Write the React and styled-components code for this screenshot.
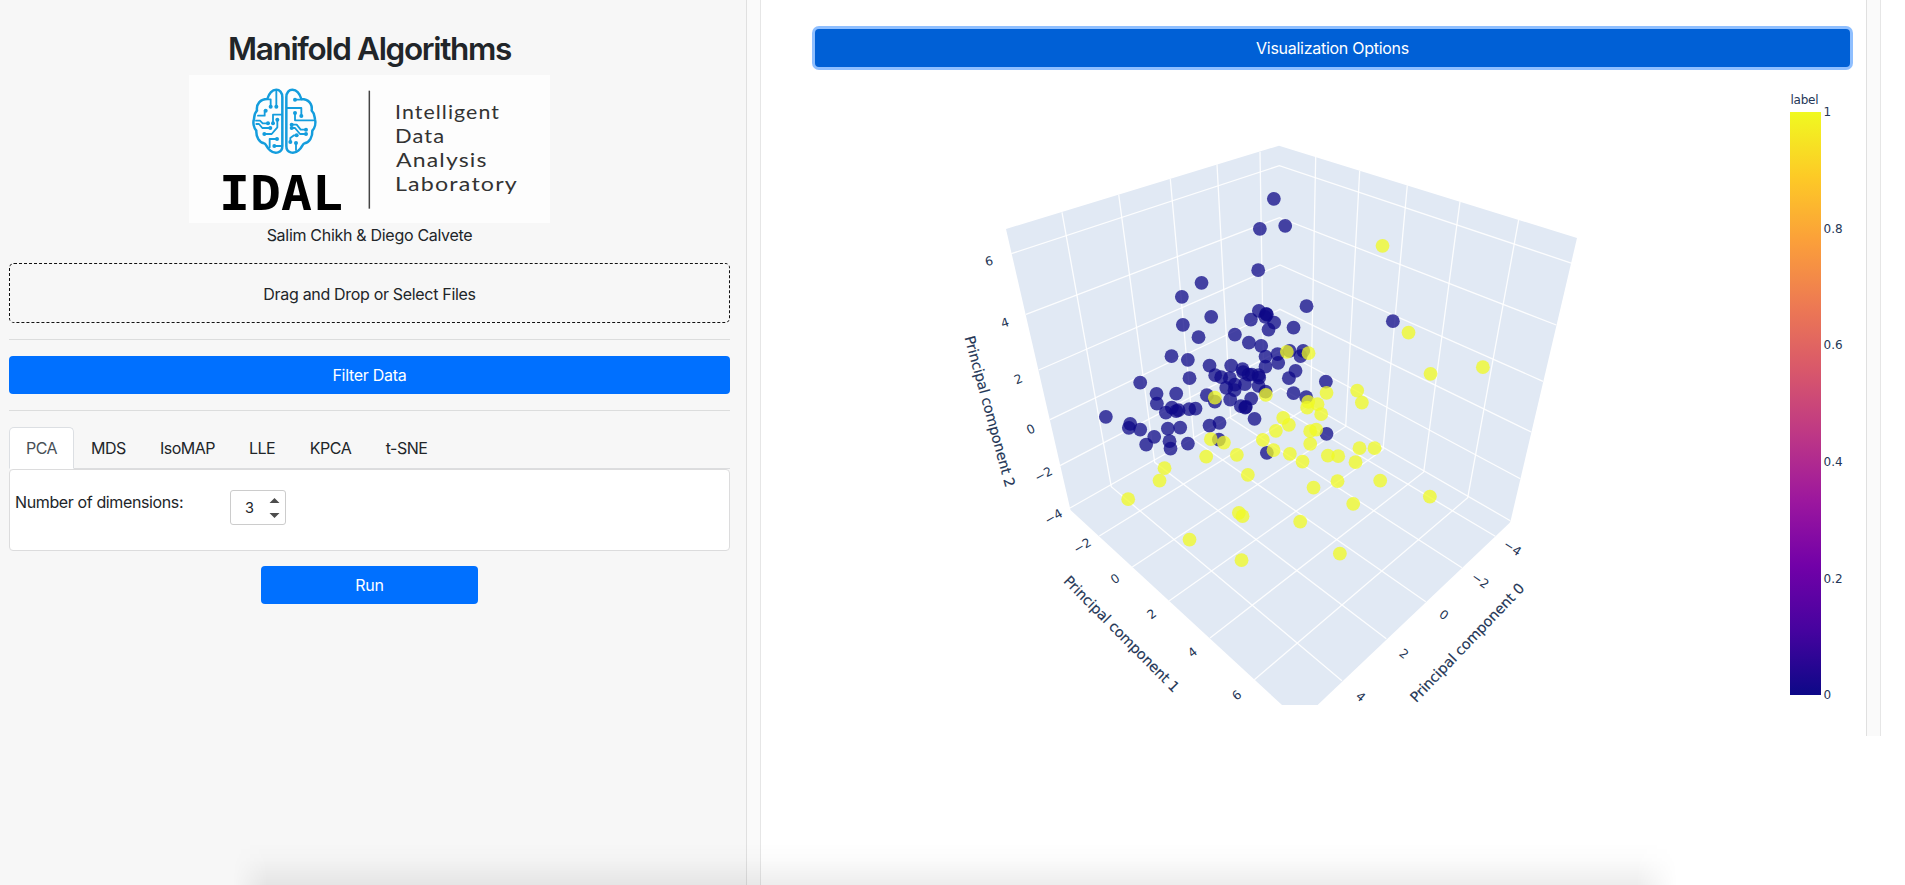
import React from "react";
import styled, { createGlobalStyle } from "styled-components";

const Global = createGlobalStyle`
  * { box-sizing: border-box; }
  html, body { margin: 0; height: 100%; overflow: hidden; background: #fff; }
  body { font-family: Inter, "Liberation Sans", sans-serif; font-size: 16px; line-height: 24px; color: #212529; }
`;

const Page = styled.div`
  display: flex;
  align-items: flex-start;
  width: 1905px;
  height: 885px;
  overflow: hidden;
`;

const Sidebar = styled.aside`
  width: 746px;
  height: 885px;
  padding: 30px 16px 0 9px;
  background: #f7f7f7;
  display: flex;
  flex-direction: column;
`;

const Gutter = styled.div`
  flex: none;
  width: 15px;
  height: ${(p) => p.$height}px;
  background: #fafafa;
  border-left: 1px solid #e0e0e0;
  border-right: 1px solid #e6e6e6;
`;

const Title = styled.h1`
  margin: 0;
  height: 45px;
  font-size: 31.5px;
  line-height: 38px;
  font-weight: 600;
  letter-spacing: -1.35px;
  text-align: center;
  white-space: nowrap;
`;

const Logo = styled.svg`
  display: block;
  width: 361px;
  height: 148px;
  margin: 0 auto;
  background: #fdfdfd;
`;

const Authors = styled.div`
  height: 40px;
  text-align: center;
  letter-spacing: -0.3px;
`;

const DropZone = styled.div`
  height: 60px;
  border: 1px dashed #111;
  border-radius: 5px;
  display: flex;
  align-items: center;
  justify-content: center;
  padding-top: 2px;
  letter-spacing: -0.32px;
`;

const Rule = styled.hr`
  width: 100%;
  height: 1px;
  margin: 16px 0;
  border: 0;
  background: #dcdddd;
`;

const Button = styled.button`
  flex: none;
  width: ${(p) => p.$width};
  height: 38px;
  padding: 0;
  border: 0;
  border-radius: 4px;
  color: #fff;
  font: inherit;
  letter-spacing: -0.28px;
  background: ${(p) => (p.$focused ? "#0060d6" : "#0070ff")};
  box-shadow: ${(p) => (p.$focused ? "0 0 0 3px #8fbfff" : "none")};
`;

const Tabs = styled.nav`
  display: flex;
  height: 42px;
  border-bottom: 1px solid #dcdddf;
`;

const Tab = styled.div`
  width: ${(p) => p.$width}px;
  height: 42px;
  display: flex;
  align-items: center;
  justify-content: center;
  letter-spacing: -0.5px;
  border: 1px solid ${(p) => (p.$active ? "#dcdfe3" : "transparent")};
  border-bottom-color: ${(p) => (p.$active ? "#fff" : "transparent")};
  border-radius: 5px 5px 0 0;
  background: ${(p) => (p.$active ? "#fff" : "transparent")};
  color: ${(p) => (p.$active ? "#495057" : "#212529")};
`;

const Card = styled.section`
  height: 82px;
  margin-bottom: 15px;
  padding: 20px 5px;
  display: flex;
  align-items: flex-start;
  background: #fff;
  border: 1px solid #dcdcdd;
  border-radius: 4px;
`;

const FieldLabel = styled.label`
  width: 215px;
  letter-spacing: -0.38px;
`;

const NumberField = styled.div`
  width: 56px;
  height: 35px;
  padding: 0 5px 0 14px;
  display: flex;
  align-items: center;
  justify-content: space-between;
  border: 1px solid #ccc;
  border-radius: 3px;
  font-size: 14.5px;
`;

const Stepper = styled.svg`
  width: 11px;
  height: 22px;
`;

const Centered = styled.div`
  display: flex;
  justify-content: center;
`;

const Main = styled.main`
  width: 1105px;
  height: 736px;
  padding: 29px 16px 0 54px;
  display: flex;
  flex-direction: column;
  gap: 17px;
`;

const Chart = styled.svg`
  display: block;
  width: 1035px;
  height: 640px;
`;

const DockShade = styled.div`
  position: absolute;
  left: 233px;
  top: 843px;
  width: 1444px;
  height: 42px;
  pointer-events: none;
  background: linear-gradient(to bottom, transparent, rgba(0, 0, 0, 0.016) 40%, rgba(0, 0, 0, 0.072));
  mask-image: linear-gradient(to right, transparent, #000 34px, #000 calc(100% - 40px), transparent);
`;

const gridLines = [
  // height levels across both walls
  "1011.3,253.7 1279.3,165.7 1572,263.3",
  "1026,314.3 1279.5,217.7 1556.3,325",
  "1038.7,370 1280,265 1543,381.3",
  "1050,419.7 1280,309.3 1531.3,432",
  "1060,465.7 1280.3,350.3 1520.3,478.7",
  "1070,508 1280.7,388.3 1510.3,520.7",
  // left wall continued over the floor
  "1062,212.3 1111.3,486.7 1341.9,680.7",
  "1118.7,194.7 1154.7,462.3 1386.3,638.7",
  "1170.3,179 1194,440 1425.8,601.7",
  "1217,164.3 1230.7,418.3 1462,567.7",
  "1260,151.7 1264,398.5 1495.3,536.3",
  // right wall continued over the floor
  "1315.7,156.7 1310.7,405.5 1099.3,536",
  "1359.7,170.7 1345.7,426.5 1132.3,567",
  "1407.3,185.3 1383,449.7 1169,601",
  "1460,201.7 1423.7,472 1210,638",
  "1518.7,219.7 1467.7,497.7 1254.3,679.7",
];

// marker centres, in thirds of a pixel from (940, 130)
const navy = [
  [1001,206],[1035,287],[959,296],[954,420],[784,458],[725,500],[813,560],[728,584],[775,621],[694,678],
  [743,689],[748,744],[600,757],[649,791],[708,790],[650,820],[497,860],[570,881],[566,893],[600,898],
  [683,895],[720,892],[642,920],[618,943],[688,933],[691,955],[743,940],[808,706],[873,706],[825,735],
  [843,741],[869,744],[907,717],[909,726],[925,733],[935,733],[955,735],[957,742],[884,763],[858,773],
  [883,780],[914,762],[955,767],[976,784],[870,808],[933,805],[943,866],[902,828],[917,830],[915,832],
  [800,795],[824,814],[677,847],[695,832],[708,843],[715,840],[747,837],[766,835],[808,886],[838,878],
  [884,613],[926,637],[963,647],[932,568],[956,542],[978,551],[975,560],[980,553],[1002,577],[985,598],
  [1060,592],[1099,528],[1012,672],[1014,698],[976,679],[976,709],[1048,662],[1089,662],[1081,678],
  [1066,722],[1046,744],[1060,789],[1098,801],[1157,754],[836,928],[980,968],[1159,911],[1358,573],
];
const yellow = [
  [1040,665],[1105,669],[824,802],[977,794],[1159,788],[1251,781],[1265,817],[1104,815],[1132,822],
  [1101,832],[1143,852],[1029,863],[1046,884],[1007,902],[1110,903],[1128,898],[968,929],[1110,941],
  [1000,960],[1049,971],[1087,994],[1163,976],[1194,978],[1258,954],[1303,954],[1246,996],[1320,1051],
  [1192,1053],[1120,1072],[1239,1121],[1469,1099],[1080,1174],[1199,1270],[1471,731],[1405,607],
  [1628,711],[1327,347],[812,927],[851,937],[798,979],[890,974],[923,1034],[673,1014],[658,1051],
  [564,1107],[896,1148],[907,1158],[748,1228],[904,1290],
];

const tickLabels = [
  ["6", 989, 261, -14], ["4", 1005, 322.7, -18], ["2", 1018.3, 379, -22], ["0", 1030.7, 429.3, -25],
  ["−2", 1043.5, 474.3, -28], ["−4", 1053.5, 516.7, -30],
  ["−2", 1082.2, 545.7, -31], ["0", 1115, 578.7, -34], ["2", 1151.7, 614, -36], ["4", 1192.5, 652.3, -38], ["6", 1236.7, 695.3, -40],
  ["−4", 1512.5, 547.9, 33], ["−2", 1480.3, 580.5, 35], ["0", 1443.9, 614.7, 36], ["2", 1404, 653.7, 38], ["4", 1360.8, 696.7, 40],
];

const axisTitles = [
  ["Principal component 2", 989.3, 411.5, 74.7, 156],
  ["Principal component 1", 1121.3, 634.3, 45.2, 157],
  ["Principal component 0", 1467.5, 643, -46.3, 158],
];

const plasma = ["#f0f921", "#fdca26", "#fb9f3a", "#ed7953", "#d8576b", "#bd3786", "#9c179e", "#7201a8", "#46039f", "#0d0887"];

const colorTicks = ["1", "0.8", "0.6", "0.4", "0.2", "0"];

function ScatterPlot() {
  return (
    <Chart viewBox="815 84 1035 640" fontFamily='"DejaVu Sans", Verdana, sans-serif' fill="#243656">
      <defs>
        <linearGradient id="plasma" x1="0" y1="0" x2="0" y2="1">
          {plasma.map((c, i) => <stop key={c} offset={i / 9} stopColor={c} />)}
        </linearGradient>
      </defs>
      <polygon points="1279,145.7 1577,238 1510.6,520.7 1509.5,523 1317.6,705 1282,705 1070.5,510 1006,229" fill="#e1e9f4" />
      <g fill="none" stroke="#fff" strokeWidth="1.3" strokeOpacity="0.9">
        {gridLines.map((p) => <polyline key={p} points={p} />)}
      </g>
      <g fill="#0d0887" fillOpacity="0.75">
        {navy.map(([x, y], i) => <circle key={i} cx={940.2 + x / 3} cy={130.2 + y / 3} r="6.9" />)}
      </g>
      <g fill="#f0f921" fillOpacity="0.75">
        {yellow.map(([x, y], i) => <circle key={i} cx={940.2 + x / 3} cy={130.2 + y / 3} r="6.9" />)}
      </g>
      <g fontSize="12.3" textAnchor="middle">
        {tickLabels.map(([t, x, y, r]) => (
          <text key={`${x}`} transform={`translate(${x} ${y}) rotate(${r})`} y="4.3">{t}</text>
        ))}
      </g>
      <g fontSize="14.3" textAnchor="middle" stroke="#243656" strokeWidth="0.15">
        {axisTitles.map(([t, x, y, r, w]) => (
          <text key={t} transform={`translate(${x} ${y}) rotate(${r})`} y="4.5" textLength={w}>{t}</text>
        ))}
      </g>
      <rect x="1790" y="112" width="31" height="583" fill="url(#plasma)" />
      <g fontSize="12">
        <text x="1790.5" y="104" textLength="28">label</text>
        {colorTicks.map((t, i) => (
          <text key={t} x="1823.5" y={116.2 + i * 116.6}>{t}</text>
        ))}
      </g>
    </Chart>
  );
}

function IdalLogo() {
  return (
    <Logo viewBox="27 165 1083 444">
      <g fill="none" stroke="#149ddd" strokeWidth="7.5" strokeLinejoin="round" strokeLinecap="round">
        <path d="M307 378V232C307 202 273 199 262 237C241 237 228 252 231 272C222 280 223 289 222 298C218 308 221 323 229 332C228 352 238 367 252 370C259 371 259 383 270 391C285 404 307 399 307 378Z" />
        <path d="M319 378V232C319 202 353 199 364 237C386 237 398 252 395 272C404 280 403 289 405 298C408 308 405 323 397 332C398 352 388 367 374 370C367 371 367 383 356 391C341 404 319 399 319 378Z" />
        <g strokeWidth="5.5">
          <path d="M289 215V260M264 238H272V260M234 287H254V272M305 284H279V308M228 302H240L248 310H264M229 312H237L247 324H272M292 300V322L275 342H254M291 357H269V382M305 378H284" />
          <path d="M346 239H365M322 264H364V288M345 279V301H400M335 314H350L362 329H378M335 324H345L360 342H378M350 346H342L331 354V366M348 369V390" />
        </g>
      </g>
      <g fill="#149ddd">
        {[[272,260],[289,260],[257,272],[279,310],[264,310],[271,324],[292,299],[253,342],[291,357],[283,378],
          [345,239],[364,288],[345,279],[335,314],[335,324],[378,329],[378,342],[350,346],[331,366],[348,369]].map(([x, y]) => (
          <circle key={`${x}-${y}`} cx={x} cy={y} r="6" />
        ))}
      </g>
      <text x="117" y="570" fontFamily='"DejaVu Sans Mono", monospace' fontWeight="700" fontSize="145" textLength="372" lengthAdjust="spacingAndGlyphs" fill="#000">IDAL</text>
      <path d="M568 212V566" stroke="#444" strokeWidth="4.5" />
      <g fontFamily="Lato, sans-serif" fontSize="59" letterSpacing="3" fill="#333">
        <text x="645" y="298" textLength="315" lengthAdjust="spacingAndGlyphs">Intelligent</text>
        <text x="645" y="370" textLength="151" lengthAdjust="spacingAndGlyphs">Data</text>
        <text x="648" y="441" textLength="275" lengthAdjust="spacingAndGlyphs">Analysis</text>
        <text x="645" y="514" textLength="369" lengthAdjust="spacingAndGlyphs">Laboratory</text>
      </g>
    </Logo>
  );
}

const tabs = [["PCA", 65], ["MDS", 69], ["IsoMAP", 89], ["LLE", 60], ["KPCA", 77], ["t-SNE", 75]];

export default function App() {
  return (
    <>
      <Global />
      <Page>
        <Sidebar>
          <Title>Manifold Algorithms</Title>
          <IdalLogo />
          <Authors>Salim Chikh &amp; Diego Calvete</Authors>
          <DropZone>Drag and Drop or Select Files</DropZone>
          <Rule />
          <Button $width="100%">Filter Data</Button>
          <Rule />
          <Tabs>
            {tabs.map(([name, width], i) => (
              <Tab key={name} $width={width} $active={i === 0}>{name}</Tab>
            ))}
          </Tabs>
          <Card>
            <FieldLabel>Number of dimensions:</FieldLabel>
            <NumberField>
              3
              <Stepper viewBox="0 0 11 22" fill="#4d4d4d">
                <path d="M0.5 6L5.5 1L10.5 6ZM0.5 16L5.5 21L10.5 16Z" />
              </Stepper>
            </NumberField>
          </Card>
          <Centered>
            <Button $width="217px">Run</Button>
          </Centered>
        </Sidebar>
        <Gutter $height={885} />
        <Main>
          <Button $width="100%" $focused>Visualization Options</Button>
          <ScatterPlot />
        </Main>
        <Gutter $height={736} />
      </Page>
      <DockShade />
    </>
  );
}
